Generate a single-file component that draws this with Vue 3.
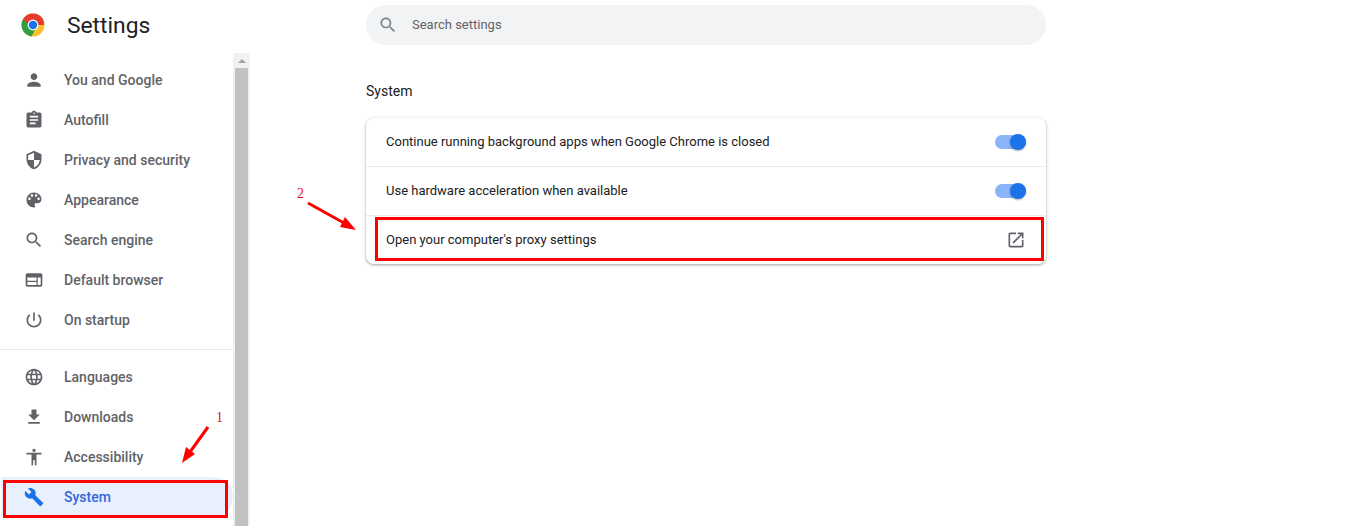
<script setup>
const groupA = [
  { label: 'You and Google', d: 'M12 12c2.21 0 4-1.79 4-4s-1.79-4-4-4-4 1.79-4 4 1.79 4 4 4zm0 2c-2.67 0-8 1.34-8 4v2h16v-2c0-2.66-5.33-4-8-4z' },
  { label: 'Autofill', d: 'M19 3h-4.18C14.4 1.84 13.3 1 12 1c-1.3 0-2.4.84-2.82 2H5c-1.1 0-2 .9-2 2v14c0 1.1.9 2 2 2h14c1.1 0 2-.9 2-2V5c0-1.1-.9-2-2-2zm-7 0c.55 0 1 .45 1 1s-.45 1-1 1-1-.45-1-1 .45-1 1-1zm2 14H7v-2h7v2zm3-4H7v-2h10v2zm0-4H7V7h10v2z' },
  { label: 'Privacy and security', d: 'M12 1L3 5v6c0 5.55 3.84 10.74 9 12 5.16-1.26 9-6.45 9-12V5l-9-4zm0 10.99h7c-.53 4.12-3.28 7.79-7 8.94V12H5V6.3l7-3.11v8.8z' },
  { label: 'Appearance', d: 'M12 3c-4.97 0-9 4.03-9 9s4.03 9 9 9c.83 0 1.5-.67 1.5-1.5 0-.39-.15-.74-.39-1.01-.23-.26-.38-.61-.38-.99 0-.83.67-1.5 1.5-1.5H16c2.76 0 5-2.24 5-5 0-4.42-4.03-8-9-8zm-5.5 9c-.83 0-1.5-.67-1.5-1.5S5.67 9 6.5 9 8 9.67 8 10.5 7.33 12 6.5 12zm3-4C8.67 8 8 7.33 8 6.5S8.67 5 9.5 5s1.5.67 1.5 1.5S10.33 8 9.5 8zm5 0c-.83 0-1.5-.67-1.5-1.5S13.67 5 14.5 5s1.5.67 1.5 1.5S15.33 8 14.5 8zm3 4c-.83 0-1.5-.67-1.5-1.5S16.67 9 17.5 9s1.5.67 1.5 1.5-.67 1.5-1.5 1.5z' },
  { label: 'Search engine', d: 'M15.5 14h-.79l-.28-.27C15.41 12.59 16 11.11 16 9.5 16 5.91 13.09 3 9.5 3S3 5.91 3 9.5 5.91 16 9.5 16c1.61 0 3.09-.59 4.23-1.57l.27.28v.79l5 4.99L20.49 19l-4.99-5zm-6 0C7.01 14 5 11.99 5 9.5S7.01 5 9.5 5 14 7.01 14 9.5 11.99 14 9.5 14z' },
  { label: 'Default browser', d: 'M20 4H4c-1.1 0-2 .9-2 2v12c0 1.1.9 2 2 2h16c1.1 0 2-.9 2-2V6c0-1.1-.9-2-2-2zm-5 14H4v-3.5h11V18zm0-5H4V9h11v4zm5 5h-3.500V9H20v9z' },
  { label: 'On startup', d: 'M13 3h-2v10h2V3zm4.83 2.17l-1.42 1.42C17.99 7.86 19 9.81 19 12c0 3.87-3.13 7-7 7s-7-3.13-7-7c0-2.19 1.01-4.14 2.58-5.42L6.17 5.17C4.23 6.82 3 9.26 3 12c0 4.97 4.03 9 9 9s9-4.03 9-9c0-2.74-1.23-5.18-3.17-6.83z' },
]
const groupB = [
  { label: 'Languages', d: 'M11.99 2C6.47 2 2 6.48 2 12s4.47 10 9.99 10C17.52 22 22 17.52 22 12S17.52 2 11.99 2zm6.93 6h-2.95c-.32-1.25-.78-2.45-1.38-3.56 1.84.63 3.37 1.91 4.33 3.56zM12 4.04c.83 1.2 1.48 2.53 1.91 3.96h-3.82c.43-1.43 1.08-2.76 1.91-3.96zM4.26 14C4.1 13.36 4 12.69 4 12s.1-1.36.26-2h3.38c-.08.66-.14 1.32-.14 2 0 .68.06 1.34.14 2H4.26zm.82 2h2.95c.32 1.25.78 2.45 1.38 3.56-1.84-.63-3.37-1.9-4.33-3.56zm2.95-8H5.08c.96-1.66 2.49-2.93 4.33-3.56C8.81 5.55 8.35 6.75 8.03 8zM12 19.96c-.83-1.2-1.48-2.53-1.91-3.96h3.82c-.43 1.43-1.08 2.76-1.91 3.96zM14.34 14H9.66c-.09-.66-.16-1.32-.16-2 0-.68.07-1.35.16-2h4.68c.09.65.16 1.32.16 2 0 .68-.07 1.34-.16 2zm.25 5.56c.6-1.11 1.06-2.31 1.38-3.56h2.95c-.96 1.65-2.49 2.93-4.33 3.56zM16.36 14c.08-.66.14-1.32.14-2 0-.68-.06-1.34-.14-2h3.38c.16.64.26 1.31.26 2s-.1 1.36-.26 2h-3.38z' },
  { label: 'Downloads', d: 'M19 9h-4V3H9v6H5l7 7 7-7zM5 18v2h14v-2H5z' },
  { label: 'Accessibility', d: 'M12 2c1.1 0 2 .9 2 2s-.9 2-2 2-2-.9-2-2 .9-2 2-2zm9 7h-6v13h-2v-6h-2v6H9V9H3V7h18v2z' },
  { label: 'System', active: true, d: 'M22.7 19l-9.1-9.1c.9-2.3.4-5-1.5-6.9-2-2-5-2.4-7.4-1.3L9 6 6 9 1.6 4.7C.4 7.1.9 10.1 2.9 12.1c1.9 1.9 4.6 2.4 6.9 1.5l9.1 9.1c.4.4 1 .4 1.4 0l2.3-2.3c.5-.4.5-1.1.1-1.4z' },
]
const rows = [
  { label: 'Continue running background apps when Google Chrome is closed', toggle: true },
  { label: 'Use hardware acceleration when available', toggle: true },
  { label: "Open your computer's proxy settings", toggle: false },
]
</script>

<template>
  <div class="page">
    <aside class="side">
      <header class="brand">
        <svg class="logo" viewBox="0 0 24 24" width="24" height="24">
          <circle cx="12" cy="12" r="11.5" fill="#fbc02d" />
          <path d="M12 .5A11.5 11.5 0 0 0 2 6.3L7 15l5-3h10.9A11.5 11.5 0 0 0 22 6.3 11.5 11.5 0 0 0 12 .5z" fill="#e33b2e" />
          <path d="M2 6.3A11.5 11.5 0 0 0 10.4 23.4L15 15l-3-1-3.5 1L5.5 9.5z" fill="#2f9e44" />
          <circle cx="12" cy="12" r="5.4" fill="#fff" />
          <circle cx="12" cy="12" r="4.2" fill="#1a73e8" />
        </svg>
        <span class="title">Settings</span>
      </header>
      <div class="side-body">
        <nav class="nav">
          <ul class="group">
            <li v-for="item in groupA" :key="item.label" class="item">
              <svg class="icon" viewBox="0 0 24 24" width="20" height="20"><path :d="item.d" /></svg>
              <span>{{ item.label }}</span>
            </li>
          </ul>
          <hr class="rule" />
          <ul class="group">
            <li v-for="item in groupB" :key="item.label" class="item" :class="{ active: item.active }">
              <svg class="icon" viewBox="0 0 24 24" width="20" height="20"><path :d="item.d" /></svg>
              <span>{{ item.label }}</span>
            </li>
          </ul>
        </nav>
        <div class="scrollbar">
          <div class="arrow"></div>
          <div class="thumb"></div>
        </div>
      </div>
    </aside>

    <main class="main">
      <div class="search">
        <svg viewBox="0 0 24 24" width="20" height="20" class="search-icon"><path d="M15.5 14h-.79l-.28-.27C15.41 12.59 16 11.11 16 9.5 16 5.91 13.09 3 9.5 3S3 5.91 3 9.5 5.91 16 9.5 16c1.61 0 3.09-.59 4.23-1.57l.27.28v.79l5 4.99L20.49 19l-4.99-5zm-6 0C7.01 14 5 11.99 5 9.5S7.01 5 9.5 5 14 7.01 14 9.5 11.99 14 9.5 14z" /></svg>
        <span class="search-text">Search settings</span>
      </div>
      <h2 class="heading">System</h2>
      <section class="card">
        <div v-for="row in rows" :key="row.label" class="row">
          <span class="row-label">{{ row.label }}</span>
          <span v-if="row.toggle" class="toggle"><span class="knob"></span></span>
          <svg v-else viewBox="0 0 24 24" width="20" height="20" class="open"><path d="M19 19H5V5h7V3H5c-1.11 0-2 .9-2 2v14c0 1.1.89 2 2 2h14c1.1 0 2-.9 2-2v-7h-2v7zM14 3v2h3.59l-9.83 9.83 1.41 1.41L19 6.41V10h2V3h-7z" /></svg>
        </div>
      </section>
    </main>

    <div class="mark mark-system"></div>
    <div class="mark mark-proxy"></div>
    <span class="num num-1">1</span>
    <span class="num num-2">2</span>
    <svg class="arrows" width="1365" height="526" viewBox="0 0 1365 526">
      <line x1="208" y1="427" x2="190" y2="452" stroke="#f00" stroke-width="3" />
      <polygon points="182,463 186,447 195,454" fill="#f00" />
      <line x1="308" y1="203" x2="344" y2="223" stroke="#f00" stroke-width="3" />
      <polygon points="356,230 340,227 345,217" fill="#f00" />
    </svg>
  </div>
</template>

<style>
html, body { margin: 0; background: #fff; }
</style>

<style scoped>
.page {
  position: relative;
  display: flex;
  height: 526px;
  overflow: hidden;
  background: #fff;
  font-family: Roboto, "Liberation Sans", sans-serif;
  font-size: 13px;
  color: #202124;
}
.side { width: 250px; flex: none; display: flex; flex-direction: column; }
.brand { height: 53px; flex: none; display: flex; align-items: center; padding-left: 21px; box-sizing: border-box; }
.logo { margin-top: -3px; }
.title { margin-left: 22px; margin-top: -3px; font-size: 22.8px; color: #202124; }
.side-body { flex: 1; display: flex; min-height: 0; }
.nav { width: 233px; flex: none; padding-top: 7px; }
.group { list-style: none; margin: 0; padding: 0; }
.rule { margin: 9px 0 7px; border: 0; border-top: 1px solid #e8e8e8; }
.item {
  height: 40px;
  display: flex;
  align-items: center;
  padding-left: 24px;
  font-size: 14px;
  font-weight: 500;
  color: #5f6368;
  border-radius: 0 20px 20px 0;
}
.item span { margin-left: 20px; }
.icon { fill: #5f6368; flex: none; }
.item.active { background: #e8f0fe; color: #3367d6; margin-left: 1px; padding-left: 23px; }
.item.active .icon { fill: #1a73e8; }
.scrollbar { width: 17px; background: #f1f1f1; padding: 0 2px; box-sizing: border-box; }
.arrow {
  width: 0; height: 0;
  margin: 6px auto 5px;
  border-left: 4px solid transparent;
  border-right: 4px solid transparent;
  border-bottom: 4px solid #a3a3a3;
}
.thumb { height: 470px; background: #c1c1c1; }
.main { width: 680px; margin-left: 116px; flex: none; }
.search {
  height: 40px;
  margin-top: 5px;
  display: flex;
  align-items: center;
  border-radius: 20px;
  background: #f1f3f4;
  color: #5f6368;
  font-size: 13px;
  padding-left: 12px;
}
.search-text { margin-top: -2px; }
.search-icon { fill: #80868b; margin-right: 14px; }
.heading { margin: 37px 0 0; font-size: 14px; font-weight: 400; line-height: 18px; color: #202124; height: 18px; }
.card {
  margin-top: 18px;
  background: #fff;
  border-radius: 8px;
  box-shadow: 0 1px 2px rgba(60, 64, 67, .3), 0 1px 3px 1px rgba(60, 64, 67, .15);
}
.row {
  height: 48px;
  display: flex;
  align-items: center;
  justify-content: space-between;
  padding: 0 20px;
  font-size: 13px;
  color: #202124;
}
.row-label { margin-top: -2px; }
.row + .row { height: 49px; border-top: 1px solid #ececec; box-sizing: border-box; }
.toggle { position: relative; width: 31px; height: 14px; border-radius: 7px; background: #8ab4f8; }
.knob {
  position: absolute; right: 0; top: -1px;
  width: 16px; height: 16px; border-radius: 50%;
  background: #1a73e8;
  box-shadow: 0 1px 2px rgba(0, 0, 0, .3);
}
.open { fill: #5f6368; }
.mark { position: absolute; border: 3px solid #f00; box-sizing: border-box; }
.mark-system { left: 3px; top: 480px; width: 225px; height: 38px; }
.mark-proxy { left: 375px; top: 217px; width: 669px; height: 44px; }
.num { position: absolute; font-family: "Liberation Serif", serif; font-size: 14px; color: #e81010; line-height: 15px; }
.num-1 { left: 216px; top: 410px; }
.num-2 { left: 297px; top: 186px; }
.arrows { position: absolute; left: 0; top: 0; pointer-events: none; }
</style>
